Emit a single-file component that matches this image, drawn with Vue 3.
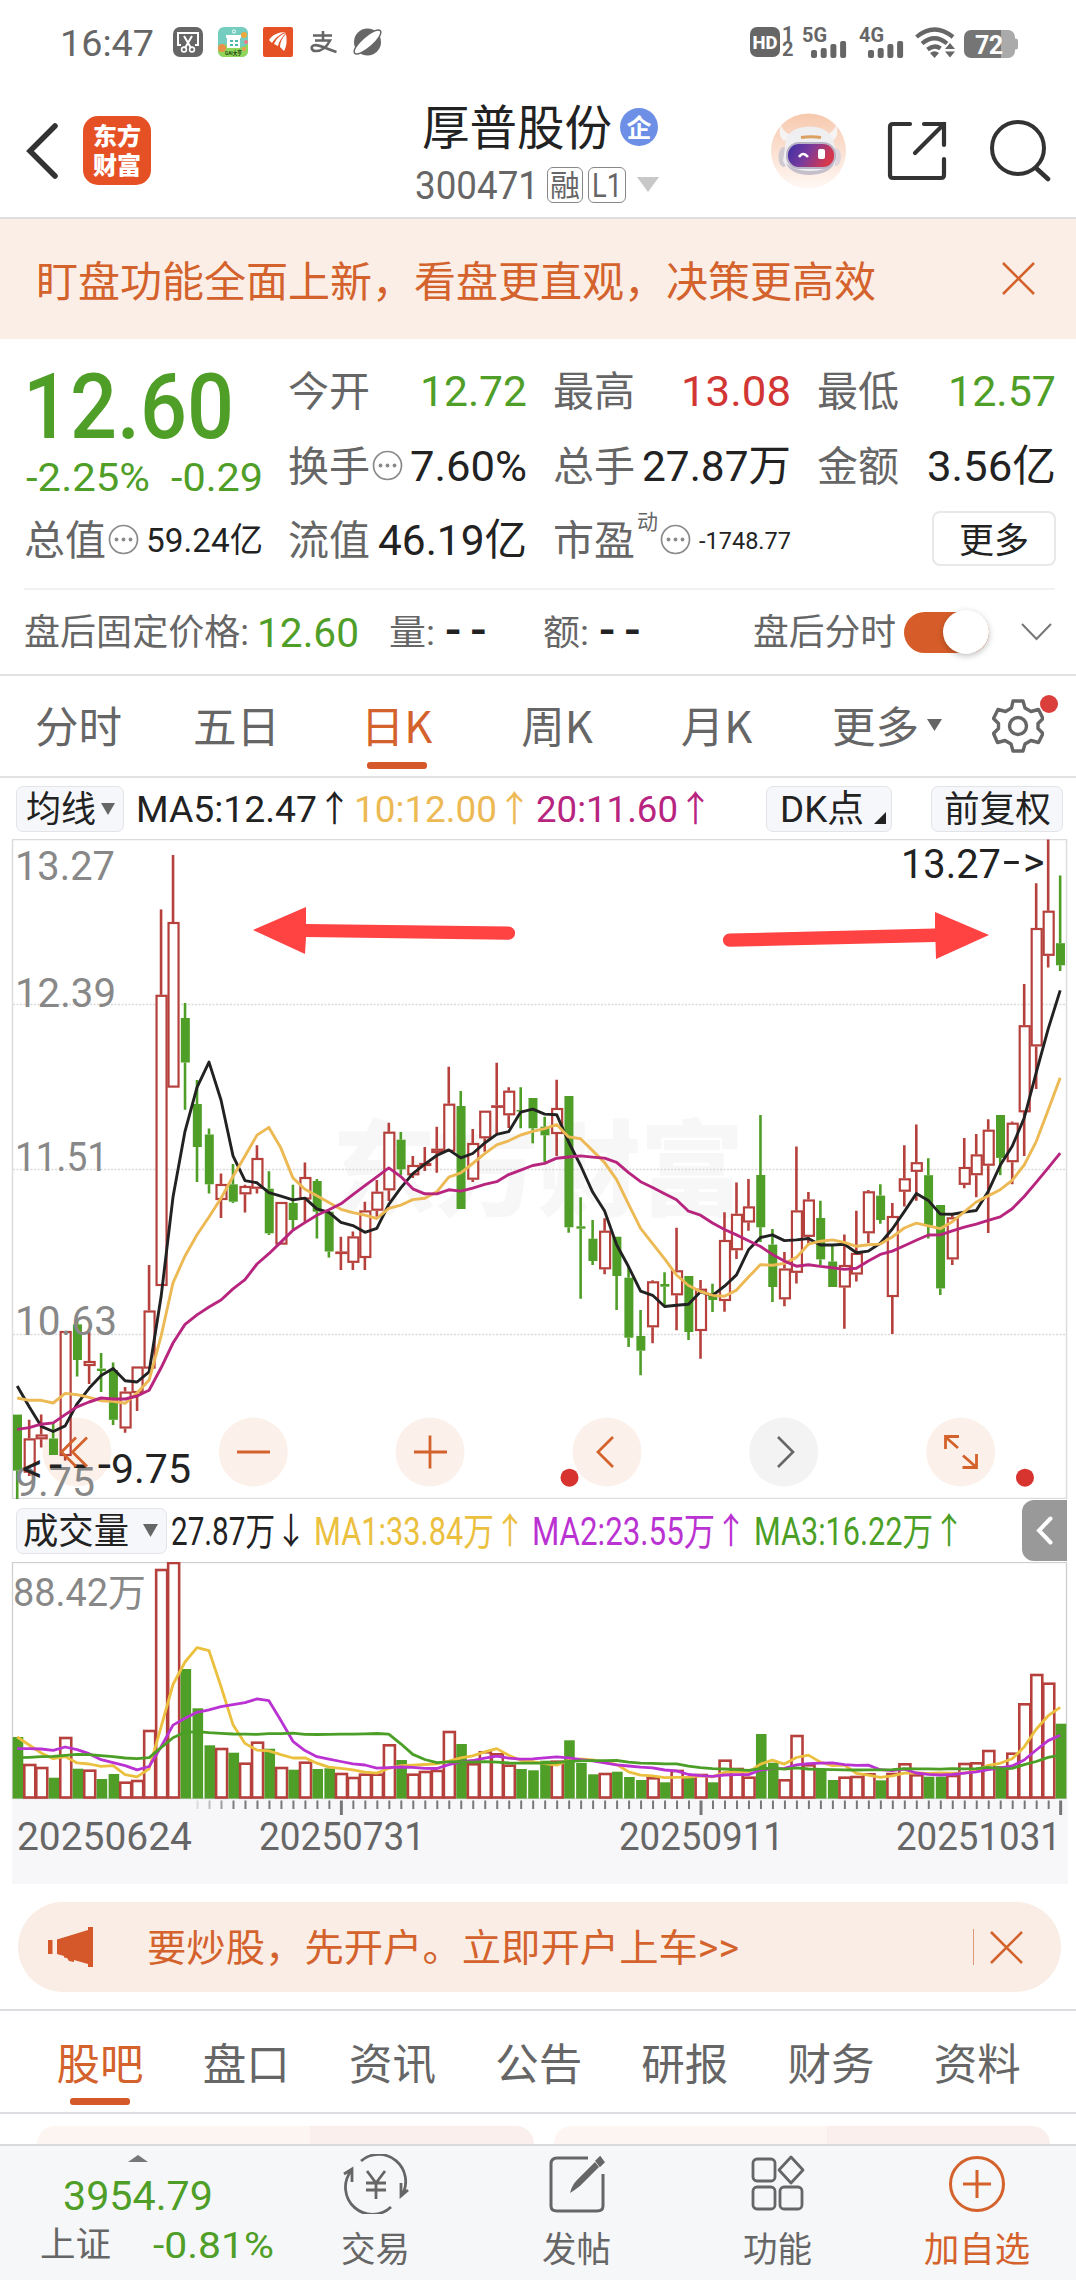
<script setup>
import { h } from 'vue'

// Single line of text set to an exact width, vertically centred on its capitals.
const Fit = (p) =>
  h('svg', { class: 'fit', width: p.w, height: p.s, style: { overflow: 'visible', flex: 'none', display: 'block' } }, [
    h('text', {
      x: 0,
      y: p.s * 0.86,
      'font-size': p.s,
      fill: 'currentColor',
      'font-weight': p.b || 400,
      textLength: p.w,
      lengthAdjust: 'spacingAndGlyphs'
    }, p.t)
  ])
Fit.props = ['t', 'w', 's', 'b']

const Dots = () =>
  h('svg', { width: 31, height: 31, viewBox: '0 0 31 31', style: { flex: 'none', display: 'block', marginLeft: '2px' } }, [
    h('circle', { cx: 15.5, cy: 15.5, r: 14, fill: 'none', stroke: '#8a8a8a', 'stroke-width': 1.7 }),
    ...[8.5, 15.5, 22.5].map((x) => h('circle', { cx: x, cy: 15.5, r: 1.9, fill: '#8a8a8a' }))
  ])

// up/down flag, high, body top, body bottom, low, volume top (chart units)
const rows = [
  [0, 1414.6, 1414.6, 1470.6, 1499, 1737], [1, 1419.8, 1438.4, 1472.7, 1476, 1764], [1, 1414.6, 1434.5, 1439.3, 1447.5, 1767],
  [0, 1423, 1438.5, 1455, 1455, 1777.7], [1, 1331, 1331, 1456, 1460.6, 1737], [0, 1320, 1324.4, 1360, 1376.4, 1768.7],
  [1, 1332, 1361, 1366, 1384, 1769.7], [0, 1353, 1368.6, 1371, 1392, 1779], [0, 1362.5, 1370, 1419.8, 1425, 1774],
  [1, 1387, 1391.6, 1428.5, 1432.8, 1781.7], [1, 1366.5, 1366.5, 1393, 1411, 1780], [1, 1265, 1310.5, 1368.6, 1368.6, 1730],
  [1, 909.4, 994.8, 1286, 1286, 1569], [1, 855, 922, 1087.6, 1087.6, 1562], [0, 1003, 1018, 1062.5, 1109.7, 1669],
  [0, 1080, 1104, 1147, 1182, 1708.3], [0, 1128.4, 1134.5, 1184.3, 1193.4, 1745.3], [1, 1173.5, 1184, 1200, 1218, 1748],
  [0, 1164, 1184.3, 1201.7, 1203, 1752.7], [1, 1184.8, 1186, 1194.3, 1212.5, 1762.7], [1, 1145.3, 1158, 1188.7, 1193.4, 1741.7],
  [0, 1171.3, 1188.7, 1233.3, 1235, 1748.7], [1, 1202, 1202, 1244.6, 1244.6, 1767], [0, 1184.8, 1203, 1220, 1229, 1769.7],
  [1, 1162.6, 1177, 1199.5, 1222.5, 1761.7], [0, 1179, 1181, 1211.7, 1238.5, 1769], [0, 1211.7, 1211.7, 1251.5, 1257.6, 1768.3],
  [1, 1236.8, 1251.5, 1253.7, 1270, 1773], [1, 1231.6, 1236.4, 1262.8, 1270, 1777], [1, 1201.7, 1210.4, 1258, 1270, 1773.7],
  [1, 1180, 1191.7, 1210.7, 1216.7, 1773.7], [1, 1122.7, 1131.7, 1190.3, 1201, 1744.3], [0, 1132, 1139.7, 1169.3, 1175, 1760],
  [1, 1156, 1165, 1175.3, 1178, 1773.7], [1, 1147, 1163, 1166, 1171, 1771], [1, 1126.7, 1148.7, 1153, 1172.7, 1770],
  [1, 1066.7, 1103.7, 1151.7, 1151.7, 1731], [0, 1091, 1106, 1209, 1209, 1744], [1, 1129, 1143, 1179.7, 1182, 1763.3],
  [1, 1110.7, 1110.7, 1138.3, 1151.7, 1751.3], [1, 1062.7, 1105.3, 1106.7, 1135, 1753.3], [1, 1087.3, 1090.7, 1115.3, 1128, 1764.7],
  [0, 1087.3, 1110, 1111, 1128.3, 1769], [0, 1098, 1098, 1128.3, 1143.3, 1770.3], [0, 1116.7, 1126.7, 1135.3, 1162, 1760.7],
  [1, 1079.7, 1108, 1134, 1156, 1760.7], [0, 1096, 1096, 1227.3, 1232.7, 1740.3], [0, 1197.3, 1226.3, 1228.7, 1298.7, 1763],
  [0, 1220, 1238.7, 1261, 1265, 1774.3], [1, 1218.3, 1230.7, 1269.3, 1274.3, 1773], [0, 1236.7, 1236.7, 1276, 1310, 1771.7],
  [0, 1266.7, 1277.7, 1337.7, 1347, 1777], [0, 1310, 1336, 1350.7, 1375.3, 1780], [1, 1280.3, 1281.3, 1327.3, 1343.3, 1777.3],
  [0, 1272.3, 1284, 1286.7, 1305, 1782.3], [1, 1227.7, 1270.3, 1295.3, 1330.3, 1770], [0, 1276, 1276, 1332, 1340, 1776],
  [1, 1280, 1288.7, 1331, 1358.7, 1774], [0, 1283.7, 1295, 1300, 1312, 1782.3], [1, 1212.3, 1240, 1301, 1311.7, 1759.7],
  [1, 1182.6, 1213.8, 1250.2, 1259, 1768], [1, 1179, 1206.4, 1222.5, 1230.7, 1776.7], [0, 1115, 1175, 1227.3, 1242, 1734],
  [0, 1229, 1244.6, 1287, 1302, 1762.7], [1, 1252, 1268.5, 1299.3, 1306.2, 1779.3], [1, 1146.6, 1210.4, 1272.8, 1283.6, 1735],
  [1, 1192, 1199.5, 1236.8, 1245, 1764.3], [0, 1200.8, 1218, 1259.4, 1265, 1769.3], [0, 1244, 1261.5, 1287, 1287, 1780],
  [1, 1234.6, 1265, 1287.5, 1328.8, 1776.7], [1, 1210.8, 1252.9, 1274.5, 1281.5, 1776], [1, 1190, 1191.3, 1233.3, 1243, 1773.3],
  [0, 1184.3, 1195.6, 1220, 1223.8, 1780.3], [1, 1203, 1216, 1297, 1334, 1773], [1, 1145.3, 1178.3, 1191.7, 1206.4, 1763.3],
  [1, 1124.5, 1162.2, 1171.8, 1200.8, 1774.3], [0, 1158.3, 1175.2, 1225.5, 1238.5, 1776.7], [0, 1205, 1205, 1288.4, 1295, 1776.7],
  [1, 1214, 1217.3, 1259.4, 1265, 1775], [1, 1138, 1167, 1184.8, 1188.2, 1763], [1, 1134, 1154.4, 1175.2, 1197.3, 1762.3],
  [1, 1119.3, 1129.7, 1165.7, 1232.9, 1750], [0, 1115, 1115, 1157.9, 1175.2, 1766], [1, 1121.4, 1122.7, 1162.2, 1184.3, 1752.7],
  [1, 984, 1025.2, 1112.3, 1156, 1703.3], [1, 883.3, 928, 1046.4, 1089, 1674], [1, 839.5, 910.7, 955.8, 967.5, 1682.7],
  [0, 875.5, 943.2, 965.3, 971, 1723.7]
]
const candles = rows.map(([up, high, top, bottom, low, vol], i) => ({
  x: 17.2 + i * 11.988, up: !!up, high, top, bottom, low, vol, close: up ? top : bottom
}))

// Moving average over n sessions; seed holds the points before the window fills.
const average = (key, n, seed) =>
  candles.map((c, i) => {
    const y = i < seed.length ? seed[i] : candles.slice(i - n + 1, i + 1).reduce((a, k) => a + k[key], 0) / n
    return c.x.toFixed(1) + ',' + y.toFixed(1)
  }).join(' ')

const priceLines = [
  { color: '#222', pts: average('close', 5, [1386, 1406.8, 1426.3, 1431.5]) },
  { color: '#ecb954', pts: average('close', 10, [1398, 1400.3, 1400.3, 1403, 1393.4, 1394.7, 1397.3, 1400.7, 1401.2]) },
  { color: '#b8257f', pts: average('close', 20, [1429.4, 1427.6, 1424.2, 1422.9, 1414.6, 1406.8, 1402, 1398, 1399, 1399, 1396, 1390.3, 1367.8, 1343, 1324.4, 1314.9, 1307, 1300, 1288.9]) }
]
const volumeLines = [
  { color: '#ebc03e', pts: average('vol', 5, [1737, 1745, 1753, 1758.7]) },
  { color: '#ba33d2', pts: average('vol', 10, [1748.7, 1748.7, 1749, 1750.3, 1747, 1749.7, 1753.7, 1759.7, 1762.7]) },
  { color: '#4c9f26', pts: average('vol', 20, [1757.7, 1757.3, 1756.7, 1756.3, 1755.3, 1754.3, 1754.7, 1755.7, 1756.7, 1758, 1758.7, 1757.7, 1747.7, 1737.7, 1732.3, 1731.7, 1732.7, 1733.3, 1734]) }
]

const priceTicks = [['13.27', 880, 100], ['12.39', 1007, 101], ['11.51', 1171, 93], ['10.63', 1335, 102], ['9.75', 1496, 80]]
const controls = [77, 253.3, 430, 607, 783.7, 960.7]
const dates = [['20250624', 17, 175], ['20250731', 259, 166], ['20250911', 619, 165], ['20251031', 896, 165]]
const ticks = candles.slice(15).map((c, k) => ({ x: c.x, major: [27, 57, 87].includes(k + 15), o: Math.min(1, 0.2 + k * 0.25) }))
const signal = [{ y: 9, h: 8 }, { y: 7, h: 10 }, { y: 3, h: 14 }, { y: 0, h: 17 }]
const infoTabs = ['股吧', '盘口', '资讯', '公告', '研报', '财务', '资料']
</script>

<template>
  <div class="page">
    <header class="status">
      <Fit class="clock" t="16:47" :w="94" :s="37" />
      <svg class="ic1" width="30" height="30" viewBox="0 0 30 30">
        <rect width="30" height="30" rx="7" fill="#666" />
        <path d="M8 18H5V6h20v12h-3M11 9l7 12M19 9l-7 12" fill="none" stroke="#fff" stroke-width="2" />
        <circle cx="11" cy="22.5" r="2.4" fill="none" stroke="#fff" stroke-width="1.6" />
        <circle cx="19" cy="22.5" r="2.4" fill="none" stroke="#fff" stroke-width="1.6" />
      </svg>
      <svg class="ic2" width="30" height="30" viewBox="0 0 30 30">
        <rect width="30" height="30" rx="6" fill="#74cdbf" />
        <path d="M0 21Q8 15 15 19T30 17V24a6 6 0 0 1-6 6H6a6 6 0 0 1-6-6Z" fill="#8fd65a" />
        <path d="M8 8h15v3h-1v10H9V11H8Z" fill="#fff" />
        <path d="M12 13h3v2h-3zM17 13h3v2h-3zM12 17h3v2h-3zM17 17h3v2h-3z" fill="#4db9ad" />
        <circle cx="16" cy="4.5" r="1.6" fill="none" stroke="#fff" />
        <circle cx="26" cy="8" r="3" fill="#eca83c" /><circle cx="28" cy="15" r="2" fill="#ec7c8a" />
        <circle cx="4" cy="21" r="4" fill="#e89249" /><circle cx="26" cy="22" r="2" fill="#ee9c54" />
        <text x="7" y="28" font-size="6" font-weight="700" fill="#234513" textLength="17" lengthAdjust="spacingAndGlyphs">GAI大亨</text>
      </svg>
      <svg class="ic3" width="30" height="30" viewBox="0 0 30 30">
        <rect width="30" height="30" rx="2" fill="#e65025" />
        <path d="M6 13c3-5 9-8 17-8-6 2-11 6-14 11zM11 17c2-5 6-9 12-11-4 4-7 8-8 13zM17 20c0-5 2-9 6-13 1 6 1 12-2 17z" fill="#fff" />
      </svg>
      <svg class="ic4" width="30" height="24" viewBox="0 0 30 24">
        <path d="M4 5.5h19M14 1v9M6 10.5h15c-3 6-8 10.500-14 10.500-5 0-6-5-1.500-5.800 5-.7 12 3.800 22 6.800" fill="none" stroke="#666" stroke-width="2.6" />
      </svg>
      <svg class="ic5" width="32" height="30" viewBox="0 0 32 30">
        <circle cx="15.500" cy="15" r="13.500" fill="#666" />
        <ellipse cx="15.500" cy="15" rx="17" ry="5.500" transform="rotate(-41 15.500 15)" fill="#fff" stroke="#666" stroke-width="1.500" />
      </svg>
      <span class="grow"></span>
      <svg class="hd" width="30" height="30" viewBox="0 0 30 30">
        <rect width="30" height="30" rx="7" fill="#666" />
        <text x="2.500" y="22" font-size="18" font-weight="800" fill="#fff" textLength="25" lengthAdjust="spacingAndGlyphs">HD</text>
      </svg>
      <div class="sims"><span>1</span><span>2</span></div>
      <div v-for="n in ['5G', '4G']" :key="n" class="net">
        <Fit :t="n" :w="25" :s="20" :b="700" />
        <svg class="bars" width="36" height="17" viewBox="0 0 36 17">
          <rect v-for="(b, i) in signal" :key="i" :x="i * 9.700" :y="b.y" width="6" :height="b.h" rx="2" fill="#666" />
        </svg>
      </div>
      <svg class="wifi" width="41" height="31" viewBox="0 0 41 31">
        <g fill="none" stroke="#666" stroke-width="4.200">
          <path d="M1.500 10Q19.500-5 38 10M7 16.500Q19.500 6 32 16.500M12.500 22.500Q19.500 17 25.500 21.500" />
        </g>
        <path d="M15 26Q19.500 22.500 24 26L19.500 31ZM30 22l5-6 5 6zM30 24.500h10l-5 6z" fill="#666" />
      </svg>
      <svg class="batt" width="54" height="28" viewBox="0 0 54 28">
        <path d="M37 0h7a7 7 0 0 1 7 7v1.500h1q2 0 2 2.500v6q0 2.500-2 2.500h-1V21a7 7 0 0 1-7 7h-7Z" fill="#aaa" />
        <path d="M7 0h30v28H7a7 7 0 0 1-7-7V7a7 7 0 0 1 7-7Z" fill="#757575" />
        <text x="11" y="23.500" font-size="25" font-weight="700" fill="#fff" textLength="28">72</text>
      </svg>
    </header>

    <nav class="head">
      <svg class="back" width="33" height="58" viewBox="0 0 33 58"><path d="M29 4 4 29l25 25" fill="none" stroke="#333" stroke-width="5.500" stroke-linecap="round" /></svg>
      <div class="logo"><b>东方</b><b>财富</b></div>
      <div class="title">
        <div class="name"><span class="cn">厚普股份</span><i>企</i></div>
        <div class="code">
          <Fit t="300471" :w="124" :s="38" />
          <span class="tag t1"><Fit t="融" :w="30" :s="30" /></span>
          <span class="tag t2"><Fit t="L1" :w="30" :s="34" /></span>
          <svg width="22" height="15" viewBox="0 0 22 15"><path d="M0 0h22L11 15Z" fill="#c8c8c8" /></svg>
        </div>
      </div>
      <svg class="bot" width="75" height="76" viewBox="0 0 75 76">
        <defs>
          <linearGradient id="halo" x1="0" y1="0" x2="0" y2="1"><stop offset="0" stop-color="#f7c9ae" /><stop offset="1" stop-color="#fff8f5" /></linearGradient>
          <linearGradient id="visor" x1="0" y1="0" x2="1" y2="0.300"><stop offset="0" stop-color="#3b2fa6" /><stop offset="0.500" stop-color="#7a3a9c" /><stop offset="1" stop-color="#d5384c" /></linearGradient>
        </defs>
        <circle cx="37.500" cy="38" r="37.500" fill="url(#halo)" />
        <path d="M10 12q-4 10 3 16l9-6q-9-1-12-10ZM65 12q4 10-3 16l-9-6q9-1 12-10Z" fill="#f6f3f3" />
        <ellipse cx="12.500" cy="44" rx="5" ry="10" fill="#cfc9d0" /><ellipse cx="65" cy="44" rx="5" ry="9" fill="#ddd6dc" />
        <path d="M14 34q0-20 25-20.500 22 .5 25 20.500l1 14q-4 13-27 13-21 0-26-13Z" fill="#efeef1" />
        <path d="M15 50q5 12 24 12 19-1 24-11-8 7-24 7-16 0-24-8Z" fill="#c4bfcb" />
        <rect x="15" y="29" width="50" height="27" rx="13" fill="#b9b2c4" />
        <rect x="17" y="31" width="46" height="23" rx="11" fill="url(#visor)" />
        <path d="M28 44q4-6 9 0" fill="none" stroke="#fff" stroke-width="2.500" />
        <rect x="47" y="36" width="7" height="10" rx="2" fill="#fff" />
        <path d="M30 24.500q10-1.500 20 0" fill="none" stroke="#dca063" stroke-width="3.200" />
      </svg>
      <svg class="share" width="60" height="60" viewBox="0 0 60 60">
        <path d="M23 3H6q-3 0-3 3v48q0 3 3 3h48q3 0 3-3V38M37 3h20v21M57 3 28 32" fill="none" stroke="#333" stroke-width="4.200" stroke-linecap="round" />
      </svg>
      <svg class="find" width="61" height="62" viewBox="0 0 61 62">
        <circle cx="28" cy="28" r="26" fill="none" stroke="#333" stroke-width="4" /><path d="m46 48 12 11" stroke="#333" stroke-width="4.600" stroke-linecap="round" />
      </svg>
    </nav>

    <div class="notice">
      <span class="cn">盯盘功能全面上新，看盘更直观，决策更高效</span>
      <svg width="33" height="33" viewBox="0 0 33 33"><path d="m1 1 31 31M32 1 1 32" stroke="#d4622c" stroke-width="2.600" /></svg>
    </div>

    <section class="quote">
      <div class="last">
        <Fit class="green big" t="12.60" :w="211" :s="90" :b="500" />
        <div class="chg green"><Fit t="-2.25%" :w="124" :s="38" /><Fit t="-0.29" :w="92" :s="38" /></div>
        <div class="cell c3"><span class="cn">总值</span><Dots /><Fit class="val" t="59.24亿" :w="117" :s="34" /></div>
      </div>
      <div class="grid">
        <div class="cell"><span class="cn">今开</span><Fit class="green val" t="12.72" :w="107" :s="43" /></div>
        <div class="cell"><span class="cn">最高</span><Fit class="red val" t="13.08" :w="110" :s="43" /></div>
        <div class="cell"><span class="cn">最低</span><Fit class="green val" t="12.57" :w="108" :s="43" /></div>
        <div class="cell"><span class="cn">换手</span><Dots /><Fit class="val" t="7.60%" :w="117" :s="43" /></div>
        <div class="cell"><span class="cn">总手</span><Fit class="val" t="27.87万" :w="149" :s="43" /></div>
        <div class="cell"><span class="cn">金额</span><Fit class="val" t="3.56亿" :w="129" :s="43" /></div>
        <div class="cell"><span class="cn">流值</span><Fit class="val" t="46.19亿" :w="149" :s="43" /></div>
        <div class="cell"><span class="cn">市盈</span><sup>动</sup><Dots /><Fit class="val" t="-1748.77" :w="92" :s="24" /></div>
        <div class="cell"><button class="more">更多</button></div>
      </div>
    </section>

    <section class="after">
      <Fit t="盘后固定价格:" :w="225" :s="36" />
      <Fit class="green ap" t="12.60" :w="102" :s="41" />
      <Fit class="av" t="量:" :w="46" :s="35" /><span class="dash">--</span>
      <Fit class="ae" t="额:" :w="46" :s="35" /><span class="dash">--</span>
      <span class="grow"></span>
      <Fit t="盘后分时" :w="143" :s="36" />
      <span class="switch"><i></i></span>
      <svg width="31" height="18" viewBox="0 0 31 18"><path d="m1 1 14.500 15L30 1" fill="none" stroke="#777" stroke-width="2" /></svg>
    </section>

    <nav class="periods">
      <div><span class="cn">分时</span></div>
      <div><span class="cn">五日</span></div>
      <div class="on"><span class="cn">日K</span></div>
      <div><span class="cn">周K</span></div>
      <div><span class="cn">月K</span></div>
      <div class="moretab"><span class="cn">更多</span><svg width="15" height="12" viewBox="0 0 15 12"><path d="M0 0h15L7.500 12Z" fill="#666" /></svg></div>
      <div class="gear">
        <svg width="52" height="54" viewBox="0 0 52 54">
          <path d="M21 2h10l2 7 6 3.500 7.500-2 4.500 9-5 5v5l5 5-4.500 9-7.500-2-6 3.500-2 7H21l-2-7-6-3.500-7.500 2L1.500 34.500l5-5v-5l-5-5 4.500-9 7.500 2 6-3.500Z" fill="none" stroke="#666" stroke-width="3.400" stroke-linejoin="round" />
          <circle cx="26" cy="27" r="8.500" fill="none" stroke="#666" stroke-width="3.400" />
        </svg>
        <i></i>
      </div>
    </nav>

    <div class="legend">
      <span class="pill p1"><Fit t="均线" :w="70" :s="36" /><svg width="14" height="12" viewBox="0 0 14 12"><path d="M0 0h14L7 12Z" fill="#666" /></svg></span>
      <Fit class="l1" t="MA5:12.47" :w="181" :s="37" /><Fit t="↑" :w="35" :s="36" />
      <Fit class="l2" t="10:12.00" :w="143" :s="37" /><Fit class="l2c" t="↑" :w="35" :s="36" />
      <Fit class="l3" t="20:11.60" :w="142" :s="37" /><Fit class="l3c" t="↑" :w="35" :s="36" />
      <span class="grow"></span>
      <span class="pill p2"><Fit t="DK点" :w="84" :s="37" /><svg class="corner" width="12" height="12" viewBox="0 0 12 12"><path d="M12 0v12H0Z" fill="#222" /></svg></span>
      <span class="pill p3"><Fit t="前复权" :w="107" :s="36" /></span>
    </div>

    <svg class="chart" width="1076" height="660" viewBox="0 839 1076 660">
      <rect x="12.500" y="839.500" width="1054" height="659" fill="#fff" stroke="#dcdcdc" stroke-width="1.500" />
      <text x="332" y="1208" font-size="104" font-weight="900" fill="#f7f7f7" textLength="412">东方财富</text>
      <path d="M13 1004.500H1066M13 1169.500H1066M13 1334.500H1066" stroke="#dadada" stroke-width="1.300" stroke-dasharray="2 1.500" />
      <circle v-for="(x, i) in controls" :key="x" :cx="x" cy="1452" r="34.500" :fill="i === 4 ? '#f3f3f3' : '#fcf1ea'" />
      <g v-for="c in candles" :key="c.x" :stroke="c.up ? '#b5403c' : '#4f9e27'" stroke-width="2.600">
        <path :d="`M${c.x} ${c.high}V${c.top}M${c.x} ${c.bottom}V${c.low}`" />
        <rect v-if="c.up" :x="c.x - 4.500" :y="c.top + 1" width="10" :height="Math.max(0.500, c.bottom - c.top - 2)" fill="#fff" stroke-width="2.200" />
        <rect v-else :x="c.x - 4.200" :y="c.top" width="9" :height="Math.max(1.500, c.bottom - c.top)" fill="#4f9e27" stroke="none" />
      </g>
      <text v-for="t in priceTicks" :key="t[0]" x="15" :y="t[1]" font-size="41" fill="#888" :textLength="t[2]" lengthAdjust="spacingAndGlyphs">{{ t[0] }}</text>
      <polyline v-for="l in priceLines" :key="l.color" :points="l.pts" fill="none" :stroke="l.color" stroke-width="2.900" stroke-linejoin="round" />
      <g font-size="41" fill="#222">
        <text x="22" y="1482" textLength="22">&lt;</text>
        <text x="49" y="1481" font-size="48" textLength="62">---</text>
        <text x="111" y="1483" textLength="80" lengthAdjust="spacingAndGlyphs">9.75</text>
        <text x="901" y="878" textLength="100" lengthAdjust="spacingAndGlyphs">13.27</text>
        <text x="1003" y="875" textLength="17" lengthAdjust="spacingAndGlyphs">-</text>
        <text x="1023" y="876" textLength="23">&gt;</text>
      </g>
      <g fill="none" stroke="#d4622c" stroke-width="2.800">
        <path d="M76 1437.500 61.500 1452 76 1466.500M87 1437.500 72.500 1452 87 1466.500" />
        <path d="M237 1452H270M414 1452H447M430 1435.500V1468.500" />
        <path d="M613 1437 598 1452 613 1467" />
        <path d="M958 1448 945.500 1437M945.500 1449V1436.500H959M963 1455.500 976 1467M976.500 1454V1467.500H962.500" />
      </g>
      <path d="M778 1437 793 1452 778 1467" fill="none" stroke="#666" stroke-width="2.600" />
      <circle cx="569.500" cy="1477.700" r="9" fill="#d73430" /><circle cx="1025" cy="1477.700" r="9" fill="#d73430" />
      <g fill="#ff4242" stroke="none">
        <path d="M253 930 306 907V924L508.500 926.500A6.600 6.600 0 0 1 508.500 939.700L306 937L305 954Z" />
        <path d="M989 935 935 912V928.500L729.500 933.500A6.500 6.500 0 0 0 729.500 946.700L935.500 942L936 959Z" />
      </g>
    </svg>

    <div class="legend vol">
      <span class="pill p4"><Fit t="成交量" :w="106" :s="36" /><svg width="15" height="13" viewBox="0 0 15 13"><path d="M0 0h15L7.500 13Z" fill="#666" /></svg></span>
      <Fit class="v0" t="27.87万" :w="104" :s="38" /><Fit t="↓" :w="32" :s="36" />
      <Fit class="v1" t="MA1:33.84万" :w="180" :s="38" /><Fit class="v1c" t="↑" :w="32" :s="36" />
      <Fit class="v2" t="MA2:23.55万" :w="183" :s="38" /><Fit class="v2c" t="↑" :w="32" :s="36" />
      <Fit class="v3" t="MA3:16.22万" :w="179" :s="38" /><Fit class="v3c" t="↑" :w="32" :s="36" />
      <span class="grow"></span>
      <span class="fold"><svg width="17" height="29" viewBox="0 0 17 29"><path d="M14.500 2.500 3 14.500l11.500 12" fill="none" stroke="#fff" stroke-width="4" stroke-linecap="round" /></svg></span>
    </div>

    <svg class="chart" width="1076" height="322" viewBox="0 1562 1076 322">
      <rect x="12" y="1799" width="1056" height="85" fill="#f7f7fa" />
      <rect x="12.500" y="1562.500" width="1054" height="236" fill="#fff" stroke="#cfcfcf" stroke-width="1.300" />
      <text x="13" y="1606" font-size="38" fill="#888" textLength="133" lengthAdjust="spacingAndGlyphs">88.42万</text>
      <g v-for="c in candles" :key="c.x">
        <rect v-if="c.up" :x="c.x - 4.900" :y="c.vol + 1" width="11" :height="1796.500 - c.vol" fill="#fff" stroke="#b5403c" stroke-width="2.600" />
        <rect v-else :x="c.x - 4.500" :y="c.vol" width="10.600" :height="1798.500 - c.vol" fill="#4f9e27" />
      </g>
      <polyline v-for="l in volumeLines" :key="l.color" :points="l.pts" fill="none" :stroke="l.color" stroke-width="2.800" stroke-linejoin="round" />
      <path v-for="t in ticks" :key="t.x" :d="`M${t.x + 0.500} 1800.500V${t.major ? 1815 : 1809}`" stroke="#777" :stroke-width="t.major ? 3 : 2" :opacity="t.o" />
      <text v-for="d in dates" :key="d[0]" :x="d[1]" y="1850" font-size="38" fill="#666" :textLength="d[2]" lengthAdjust="spacingAndGlyphs">{{ d[0] }}</text>
    </svg>

    <div class="promo">
      <svg width="46" height="40" viewBox="0 0 46 40"><path d="M0 13h4.500v14H0zM9 12.500 40 3V0h5v40h-5v-3l-14-4v2l-5-1-2-3-3-.5v-1.500l-7-2Z" fill="#d4582a" /></svg>
      <Fit class="ptext" t="要炒股，先开户。立即开户上车>>" :w="592" :s="38" />
      <span class="grow"></span>
      <i></i>
      <svg width="33" height="33" viewBox="0 0 33 33"><path d="m1 1 31 31M32 1 1 32" stroke="#d4622c" stroke-width="2.600" /></svg>
    </div>

    <nav class="tabs"><span v-for="(t, i) in infoTabs" :key="t" :class="{ on: i === 0 }"><span class="cn">{{ t }}</span></span></nav>
    <div class="cards"><i></i><i></i></div>

    <footer class="bottom">
      <div class="index">
        <svg width="20" height="7" viewBox="0 0 20 7"><path d="M0 7 10 0l10 7Z" fill="#777" /></svg>
        <Fit class="green ix" t="3954.79" :w="150" :s="41" />
        <div class="ixrow"><Fit t="上证" :w="71" :s="35" /><Fit class="green" t="-0.81%" :w="121" :s="37" /></div>
      </div>
      <div class="act">
        <svg width="66" height="60" viewBox="0 0 66 60" fill="none" stroke="#666" stroke-width="2.800">
          <path d="M18 7A27 27 0 0 1 59 41M48 53A27 27 0 0 1 8 17M1 20l8-5v13M65 36l-7 6V29" />
          <path d="m24 17 9 12 9-12M33 29v16M23 29h20M23 36h20" />
        </svg>
        <Fit t="交易" :w="69" :s="35" />
      </div>
      <div class="act">
        <svg width="56" height="60" viewBox="0 0 56 60" fill="none" stroke="#666" stroke-width="3">
          <path d="M39 4H8q-6 0-6 6v42q0 5 6 5h40q6 0 6-5V20" />
          <path d="M21 39q2-8 7-13L46 8l4 5-19 19q-5 4-10 7Z" fill="#666" stroke="none" /><path d="m48 7 3-3 3 4-3 3Z" fill="#666" />
        </svg>
        <Fit t="发帖" :w="69" :s="35" />
      </div>
      <div class="act">
        <svg width="54" height="60" viewBox="0 0 54 60" fill="none" stroke="#666" stroke-width="2.800">
          <rect x="2" y="5" width="22" height="22" rx="4" /><path d="m40 3 12 13-12 13L28 16Z" stroke-linejoin="round" />
          <rect x="2" y="33" width="22" height="22" rx="4" /><rect x="29" y="33" width="22" height="22" rx="4" />
        </svg>
        <Fit t="功能" :w="69" :s="35" />
      </div>
      <div class="act add">
        <svg width="58" height="60" viewBox="0 0 58 60" fill="none" stroke="#d4622c" stroke-width="3"><circle cx="29" cy="30" r="26.500" /><path d="M29 16v28M15 30h28" /></svg>
        <Fit t="加自选" :w="106" :s="35" />
      </div>
    </footer>
  </div>
</template>

<style>
body { margin: 0; background: #fff; }
</style>

<style scoped>
.page { width: 1076px; height: 2280px; overflow: hidden; background: #fff; color: #666; font-family: Roboto, "Noto Sans CJK SC", sans-serif; display: flex; flex-direction: column; }
.page > * { flex: none; box-sizing: border-box; }
svg { display: block; flex: none; }
.cn { line-height: 1; margin-top: -0.1em; white-space: nowrap; font-family: "Noto Sans CJK SC", sans-serif; }
.grow { flex: 1; }
.green { color: #4f9e27; }
.red { color: #d13634; }

.status { height: 84px; display: flex; align-items: center; padding: 0 58px 0 60px; }
.ic1 { margin-left: 19px; }
.ic2, .ic3 { margin-left: 15px; }
.ic4 { margin-left: 16px; }
.ic5 { margin-left: 13px; }
.sims { width: 22px; padding-left: 2px; font: 700 20px/15px Roboto, sans-serif; display: flex; flex-direction: column; box-sizing: border-box; }
.net { width: 57px; height: 30px; display: flex; flex-direction: column; }
.net .fit { margin-top: -2px; }
.bars { margin: -4px 0 0 9px; }
.wifi { margin: 0 8px 0 -1px; }
.batt { margin-top: 3px; }

.head { height: 135px; display: flex; align-items: center; border-bottom: 2px solid #dedede; }
.back { margin-left: 26px; }
.logo { margin-left: 24px; width: 68px; height: 69px; border-radius: 15px; background: #e65025; color: #fff; display: flex; flex-direction: column; align-items: center; justify-content: center; font: 700 24px/29px "Noto Sans CJK SC", sans-serif; padding-bottom: 3px; box-sizing: border-box; }
.title { margin: 9px 0 0 264px; width: 356px; }
.name { display: flex; align-items: center; padding-left: 7px; font-size: 47.500px; color: #222; }
.name i { margin: -2px 0 0 8px; width: 38px; height: 38px; border-radius: 50%; background: #6d8fe6; color: #fff; font: 700 25px/36px "Noto Sans CJK SC", sans-serif; text-align: center; }
.code { display: flex; align-items: center; margin-top: 17px; }
.tag { border: 1.500px solid #888; border-radius: 6px; height: 34px; display: flex; align-items: center; justify-content: center; box-sizing: content-box; }
.t1 { width: 34px; margin-left: 8px; }
.t2 { width: 36px; margin: 0 11px 0 5px; }
.share { margin-left: 41px; }
.find { margin-left: 43px; }

.notice { height: 120px; background: #fbeee6; color: #d4622c; display: flex; align-items: center; justify-content: space-between; padding: 4px 41px 0 36px; font-size: 42px; }
.notice svg { margin-top: -6px; }

.quote { height: 249px; display: flex; padding: 14px 20px 0 24px; }
.last { width: 240px; margin-right: 25px; }
.big { margin: 8px 0 0 -1px; }
.chg { display: flex; justify-content: space-between; margin: 2px 0 0 2px; height: 42px; align-items: center; padding: 3px 0 6px; }
.cell { display: flex; align-items: center; height: 75px; font-size: 41px; }
.last .cell { margin-top: -2px; }
.cell .val { margin-left: auto; }
.val:not(.green):not(.red) { color: #222; }
.grid { flex: 1; display: grid; grid-template-columns: 239px 238px 239px; grid-template-rows: 75px 74px 75px; column-gap: 26px; }
sup { font: 21px/21px "Noto Sans CJK SC", sans-serif; margin: -38px 0 0 2px; }
.more { margin: -3px 0 0 auto; width: 124px; height: 55px; border: 2px solid #e8e8e8; border-radius: 8px; background: #fff; color: #222; font: 35px/48px "Noto Sans CJK SC", sans-serif; padding: 0; }

.after { height: 86px; margin: 0 21px 0 24px; padding-right: 3px; border-top: 2px solid #f2f2f2; display: flex; align-items: center; }
.ap { margin-left: 8px; }
.av { margin-left: 30px; }
.ae { margin-left: 54px; }
.dash { width: 44px; margin-left: 10px; color: #222; font: 500 48px/48px Roboto, sans-serif; letter-spacing: 9px; white-space: nowrap; margin-top: -4px; }
.switch { margin: 0 32px 0 8px; width: 85px; height: 41px; border-radius: 21px; background: #d65d29; display: flex; align-items: center; justify-content: flex-end; }
.switch i { width: 46px; height: 44px; border-radius: 50%; background: #fff; box-shadow: 0 2px 6px rgba(0, 0, 0, 0.25); flex: none; }

.periods { height: 104px; border-top: 2px solid #e2e2e2; border-bottom: 2px solid #e2e2e2; display: grid; grid-template-columns: 157px 159px 161px 160px 159px 182px 98px; font-size: 43.500px; align-items: stretch; }
.periods > div { display: flex; align-items: center; justify-content: center; padding-top: 2px; }
.on { color: #d4622c; position: relative; }
.on::after { content: ""; position: absolute; left: 50%; bottom: 7px; width: 60px; height: 7px; margin-left: -30px; border-radius: 3px; background: #d4582a; }
.moretab svg { margin: -4px 0 0 8px; }
.gear { position: relative; }
.gear svg { margin: -2px 0 0 -18px; }
.gear i { position: absolute; left: 62px; top: 19px; width: 18px; height: 18px; border-radius: 50%; background: #db3f3b; }

.legend { height: 61px; display: flex; align-items: center; color: #222; }
.pill { height: 44px; border: 1.500px solid #e2e4e8; border-radius: 7px; background: #f6f7fa; display: flex; align-items: center; color: #222; box-sizing: content-box; }
.p1 { margin-left: 16px; width: 97px; padding-left: 9px; gap: 5px; }
.l1 { margin-left: 12px; }
.l2 { margin-left: 2px; }
.l3 { margin-left: 4px; }
.l2, .l2c { color: #ecb954; }
.l3, .l3c { color: #b8257f; }
.p2 { width: 111px; padding-left: 13px; gap: 10px; margin-right: 39px; }
.corner { align-self: flex-end; margin-bottom: 7px; }
.p3 { width: 130px; justify-content: center; margin-right: 13px; }
.vol { height: 63px; }
.p4 { margin-left: 16px; width: 143px; padding-left: 6px; gap: 14px; }
.v0 { margin-left: 4px; }
.v1 { margin-left: 7px; }
.v2 { margin-left: 6px; }
.v3 { margin-left: 7px; }
.v1, .v1c { color: #ebc03e; }
.v2, .v2c { color: #ba33d2; }
.v3, .v3c { color: #4c9f26; }
.fold { width: 45px; height: 61px; margin-right: 9px; background: #999; border-radius: 12px 0 0 12px; display: flex; align-items: center; justify-content: center; }

.promo { height: 90px; margin: 18px 15px 17px 18px; border-radius: 45px; background: #faede5; color: #d4622c; display: flex; align-items: center; padding: 0 38px 0 30px; }
.ptext { margin-left: 53px; }
.promo i { width: 1.500px; height: 36px; background: #dd9a78; margin-right: 16px; }
.tabs { height: 105px; border-top: 2px solid #dcdde0; border-bottom: 2px solid #dcdde0; display: grid; grid-template-columns: repeat(7, 146.200px); padding-left: 27px; font-size: 43.500px; }
.tabs > span { display: flex; align-items: center; justify-content: center; padding-top: 4px; }
.cards { height: 30px; padding: 12px 26px 0 37px; display: flex; gap: 20px; overflow: hidden; }
.cards i { flex: 1; border-radius: 20px 20px 0 0; background: linear-gradient(90deg, #fdf5f1 0 55%, #fbefed 55%); }

.bottom { height: 136px; background: #f6f7f9; border-top: 2px solid #d9dadd; display: flex; }
.index { width: 275px; display: flex; flex-direction: column; align-items: center; padding-top: 9px; }
.ix { margin-top: 13px; }
.ixrow { display: flex; align-items: center; gap: 42px; margin: 10px -38px 0 0; }
.act { display: flex; flex-direction: column; align-items: center; padding-top: 8px; gap: 18px; width: 201px; }
.add { color: #d4622c; width: 198px; }
</style>
